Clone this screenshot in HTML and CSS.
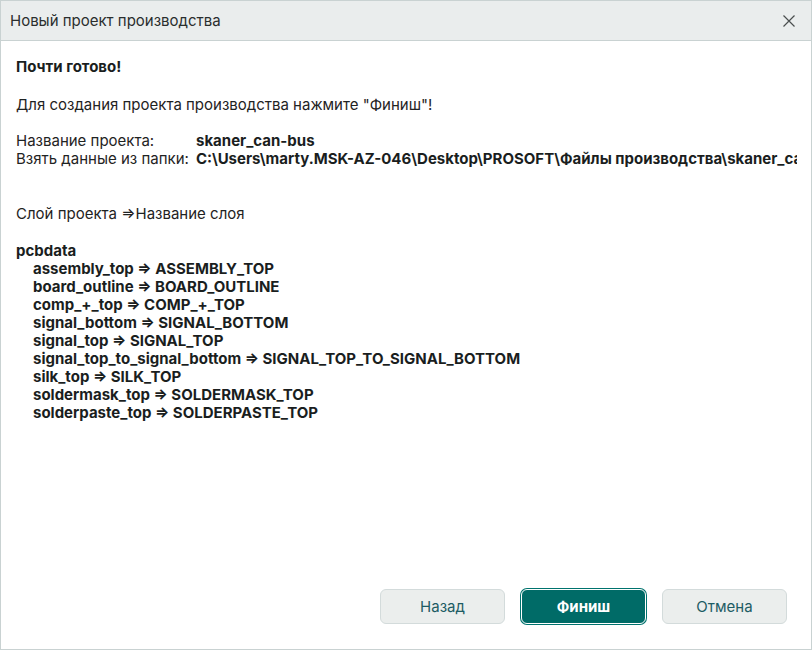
FILE: index.html
```html
<!DOCTYPE html>
<html lang="ru">
<head>
<meta charset="utf-8">
<link rel="stylesheet" href="styles.css">
</head>
<body>
<div class="dialog">
  <div class="titlebar">
    <span class="title">Новый проект производства</span>
    <span class="close"><svg width="12" height="12" viewBox="0 0 12 12"><path d="M0.5 0.5 L11.5 11.5 M11.5 0.5 L0.5 11.5" stroke="#4a4e4e" stroke-width="1.2" fill="none"/></svg></span>
  </div>
  <div class="content">
    <div class="line bold">Почти готово!</div>
    <div class="line intro">Для создания проекта производства нажмите "Финиш"!</div>
    <div class="info">
      <div class="row"><span class="label">Название проекта:</span><span class="bold">skaner_can-bus</span></div>
      <div class="row"><span class="label">Взять данные из папки:</span><span class="bold value">C:\Users\marty.MSK-AZ-046\Desktop\PROSOFT\Файлы производства\skaner_can-bus</span></div>
    </div>
    <div class="line layers">Слой проекта ⇒Название слоя</div>
    <div class="line bold group">pcbdata</div>
    <div class="list bold">
      <div>assembly_top ⇒ ASSEMBLY_TOP</div>
      <div>board_outline ⇒ BOARD_OUTLINE</div>
      <div>comp_+_top ⇒ COMP_+_TOP</div>
      <div>signal_bottom ⇒ SIGNAL_BOTTOM</div>
      <div>signal_top ⇒ SIGNAL_TOP</div>
      <div>signal_top_to_signal_bottom ⇒ SIGNAL_TOP_TO_SIGNAL_BOTTOM</div>
      <div>silk_top ⇒ SILK_TOP</div>
      <div>soldermask_top ⇒ SOLDERMASK_TOP</div>
      <div>solderpaste_top ⇒ SOLDERPASTE_TOP</div>
    </div>
  </div>
  <div class="footer">
    <button class="btn">Назад</button>
    <button class="btn primary">Финиш</button>
    <button class="btn">Отмена</button>
  </div>
</div>
</body>
</html>
```

FILE: styles.css
```css
html, body {
  margin: 0;
  padding: 0;
  background: #ffffff;
}
body {
  font-family: Inter, "Noto Sans", sans-serif;
  color: #1f2323;
}
.dialog {
  width: 812px;
  height: 650px;
  box-sizing: border-box;
  border: 1px solid #c9d2d2;
  display: flex;
  flex-direction: column;
  overflow: hidden;
}
.titlebar {
  height: 39px;
  flex: none;
  background: #eaeded;
  border-bottom: 1px solid #c9d2d2;
  display: flex;
  align-items: center;
  justify-content: space-between;
  padding: 0 16px 0 9px;
}
.title {
  font-size: 15px;
  color: #2a2e2e;
}
.close {
  display: flex;
  align-items: center;
}
.content {
  flex: 1;
  padding: 17px 14px 0 15px;
  font-size: 15px;
  line-height: 18px;
  overflow: hidden;
}
.line { white-space: nowrap; }
.intro { margin-top: 20px; }
.info { margin-top: 18px; }
.layers { margin-top: 37px; }
.group { margin-top: 19px; }
.bold { font-weight: 700; color: #1a1e1e; }
.row {
  display: flex;
  white-space: nowrap;
  overflow: hidden;
}
.label {
  width: 180px;
  flex: none;
}
.value {
  white-space: nowrap;
  overflow: hidden;
  min-width: 0;
}
.list {
  padding-left: 17px;
}
.footer {
  flex: none;
  height: 60px;
  display: flex;
  justify-content: flex-end;
  align-items: flex-start;
  gap: 16px;
  padding: 0 24px 0 0;
}
.btn {
  width: 125px;
  height: 35px;
  box-sizing: border-box;
  border: 1px solid #d3dbdb;
  border-radius: 6px;
  background: #ebeeed;
  color: #1d5c64;
  font-family: Inter, "Noto Sans", sans-serif;
  font-size: 15px;
  padding: 0;
}
.btn.primary {
  background: #006b67;
  color: #ffffff;
  font-weight: 700;
  border: 1px solid #ffffff;
  box-shadow: 0 0 0 1px #00736e;
}
```
